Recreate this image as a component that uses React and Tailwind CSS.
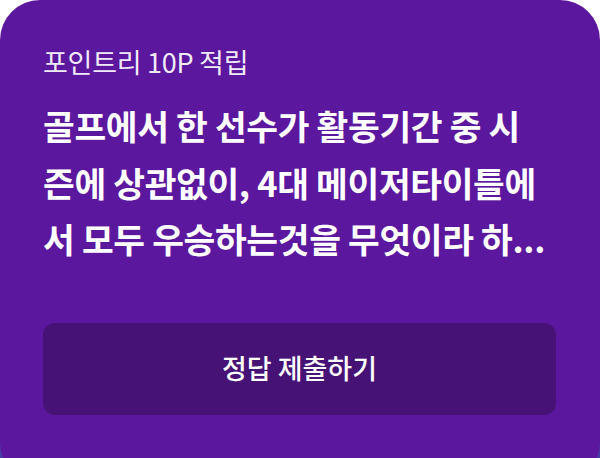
export default function App() {
  return (
    <div
      className="w-[600px] h-[458px] overflow-hidden bg-[linear-gradient(to_bottom,#ffffff_0%,#ffffff_80%,#4a3aa6_93%)]"
      style={{ fontFamily: '"Noto Sans CJK KR", "Noto Sans", sans-serif' }}
    >
      <div className="w-[600px] h-[482px] rounded-[40px] bg-[#5c179f] pt-[47px] px-[43px] flex flex-col">
        <div className="text-[27px] leading-[30px] text-[#f1eaf8] tracking-[-0.01em]">
          포인트리 10P 적립
        </div>
        <div className="mt-[20px] text-[34.5px] leading-[56.5px] font-bold text-white tracking-[-0.01em] whitespace-nowrap">
          골프에서 한 선수가 활동기간 중 시<br />
          즌에 상관없이, 4대 메이저타이틀에<br />
          서 모두 우승하는것을 무엇이라 하...
        </div>
        <button className="mt-[56px] w-[513px] h-[92px] rounded-[12px] bg-[#461275] text-white text-[27px] font-medium flex items-center justify-center">
          정답 제출하기
        </button>
      </div>
    </div>
  );
}
